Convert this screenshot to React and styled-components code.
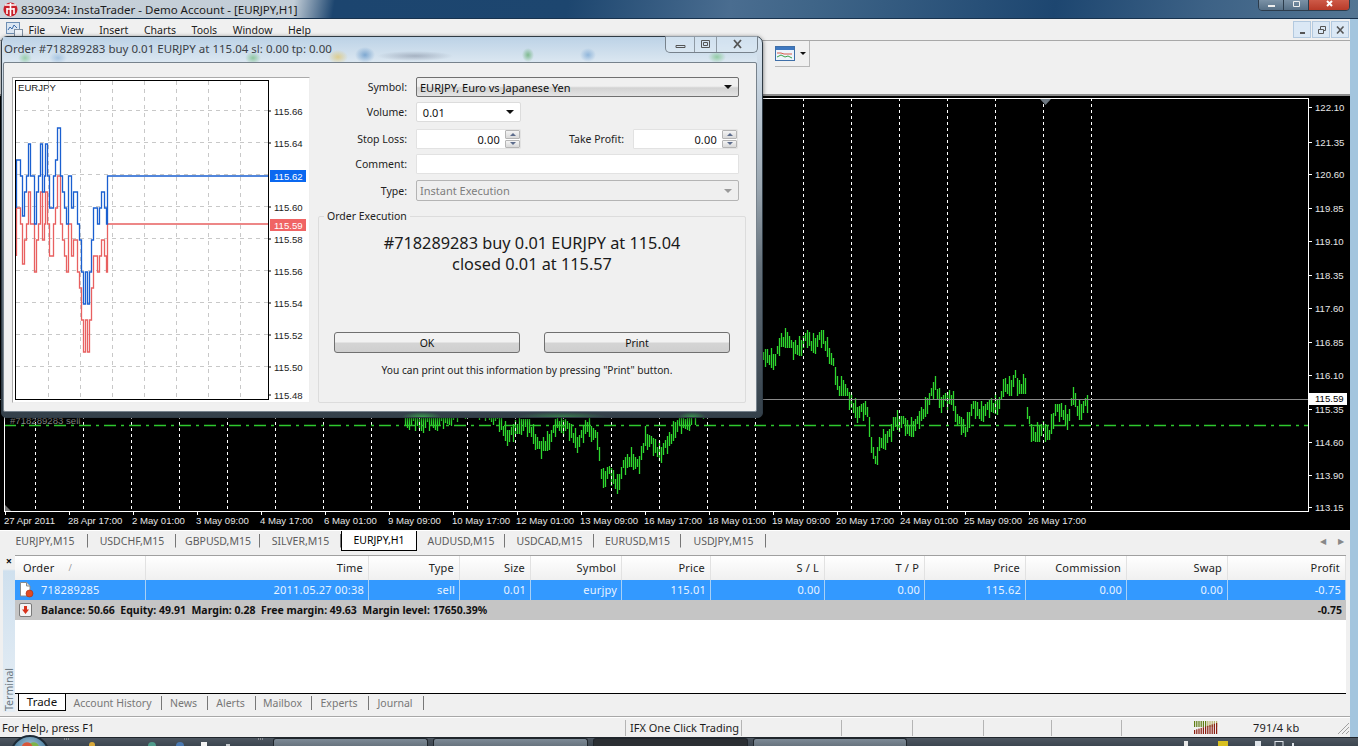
import React from "react";
import styled, { createGlobalStyle } from "styled-components";

const GlobalStyle = createGlobalStyle`
  * {
    box-sizing: border-box;
  }
  html, body {
    margin: 0;
    height: 100%;
    overflow: hidden;
    background: #f0f0f0;
  }
  body, button {
    font-family: "Noto Sans", "Liberation Sans", sans-serif;
    font-size: 11px;
    color: #111;
  }
`;

const MENU = ["File", "View", "Insert", "Charts", "Tools", "Window", "Help"];
const SYMBOL_TABS = [
  ["EURJPY,M15", 86], ["USDCHF,M15", 88], ["GBPUSD,M15", 84], ["SILVER,M15", 81], ["EURJPY,H1", 76],
  ["AUDUSD,M15", 88], ["USDCAD,M15", 89], ["EURUSD,M15", 87], ["USDJPY,M15", 85],
];
const TERMINAL_TABS = [["Account History", 96], ["News", 46], ["Alerts", 48], ["Mailbox", 56], ["Experts", 57], ["Journal", 55]];
const COLUMNS = ["Time", "Type", "Size", "Symbol", "Price", "S / L", "T / P", "Price", "Commission", "Swap", "Profit"];
const ROW = ["2011.05.27 00:38", "sell", "0.01", "eurjpy", "115.01", "0.00", "0.00", "115.62", "0.00", "0.00", "-0.75"];
const GRID = "131px 223px 91px 71px 91px 89px 114px 100px 101px 101px 101px 118px";

const PRICES = [
  ["122.10", 107], ["121.35", 142], ["120.60", 174], ["119.85", 208], ["119.10", 241], ["118.35", 275], ["117.60", 308],
  ["116.85", 342], ["116.10", 375], ["115.35", 409], ["114.60", 442], ["113.90", 475], ["113.15", 507],
];
const DATES = [
  "27 Apr 2011", "28 Apr 17:00", "2 May 01:00", "3 May 09:00", "4 May 17:00", "6 May 01:00", "9 May 09:00", "10 May 17:00", "12 May 01:00",
  "13 May 09:00", "16 May 17:00", "18 May 01:00", "19 May 09:00", "20 May 17:00", "24 May 01:00", "25 May 09:00", "26 May 17:00",
];
const TREND = [
  [405, 418], [420, 422], [440, 420], [470, 405], [495, 415], [508, 437], [520, 424], [530, 428], [540, 450], [550, 438], [557, 423], [565, 425],
  [578, 443], [587, 425], [597, 440], [602, 480], [608, 472], [617, 485], [623, 467], [632, 457], [638, 468], [645, 437], [660, 453], [670, 440],
  [675, 427], [690, 420], [700, 410], [740, 380], [765, 357], [775, 360], [780, 343], [787, 337], [792, 350], [798, 348], [807, 338], [812, 345],
  [822, 337], [828, 350], [833, 365], [838, 390], [843, 385], [848, 398], [857, 412], [867, 410], [870, 437], [875, 463], [880, 442], [890, 435],
  [895, 420], [902, 422], [908, 430], [917, 423], [923, 412], [930, 397], [935, 385], [940, 402], [952, 398], [957, 420], [965, 430], [972, 407],
  [980, 413], [990, 407], [1000, 403], [1003, 387], [1010, 387], [1015, 377], [1018, 390], [1025, 383], [1027, 413], [1032, 437], [1043, 428],
  [1048, 437], [1055, 410], [1063, 413], [1068, 420], [1073, 395], [1078, 412], [1088, 402],
];
const TICK_PRICES = [["115.66", 111], ["115.64", 143], ["115.60", 207], ["115.58", 239], ["115.56", 271], ["115.54", 303], ["115.52", 335], ["115.50", 367], ["115.48", 395]];
const TICKS = [
  [16, 208], [18, 160], [20, 160], [22, 176], [24, 216], [26, 192], [28, 176], [30, 144], [32, 176], [34, 176], [36, 224], [38, 192], [40, 176], [42, 144],
  [44, 192], [45, 176], [47, 144], [49, 176], [51, 208], [53, 208], [55, 176], [57, 160], [60, 128], [62, 176], [64, 192], [66, 208], [68, 224], [71, 176],
  [73, 208], [75, 192], [77, 192], [79, 224], [81, 240], [83, 272], [85, 304], [87, 272], [89, 304], [91, 272], [93, 240], [95, 208], [97, 208], [99, 224],
  [101, 208], [104, 192], [106, 208], [107, 224], [109, 176],
];

// step line, the way the tick chart draws it
const stepPath = (points, dy = 0) =>
  points.map(([x, y], i) => `${i ? "L" : "M"}${x + 0.5} ${y + dy}${i < points.length - 1 ? ` V${points[i + 1][1] + dy}` : ""}`).join(" ");

const bars = () => {
  let d = "";
  for (let x = 405; x <= 1090; x += 2) {
    const next = TREND.findIndex((p) => p[0] >= x);
    const b = TREND[Math.max(next, 1)];
    const a = TREND[Math.max(next, 1) - 1];
    const mid = a[1] + ((b[1] - a[1]) * (x - a[0])) / (b[0] - a[0]);
    const wobble = ((x * 37) % 7) - 3;
    const half = 4 + ((x * 13) % 7);
    d += `M${x + 0.5} ${Math.round(mid + wobble - half)}V${Math.round(mid + wobble + half)}`;
  }
  return d;
};

const Page = styled.div`
  position: relative;
  width: 1358px;
  height: 746px;
  overflow: hidden;
  display: flex;
  flex-direction: column;
`;

const TitleBar = styled.div`
  height: 19px;
  flex: none;
  display: flex;
  align-items: center;
  gap: 3px;
  padding-left: 3px;
  font-size: 11.5px;
  color: #1c1c1c;
  background: linear-gradient(100deg, #c9d2da 0, #c2cdd7 290px, #1c456f 330px, #1d466f 560px, #4a6d90 720px, #3f6588 800px, #1d4670 1040px, #3d6286 1190px, #567895 1358px);
  border-bottom: 1px solid #17324e;
`;

const WindowButtons = styled.div`
  position: absolute;
  top: -6px;
  right: 8px;
  width: 92px;
  height: 17px;
  display: grid;
  grid-template-columns: 25px 25px 1fr;
  border: 1px solid #2c3c4c;
  border-radius: 0 0 4px 4px;
  overflow: hidden;
  span {
    background: linear-gradient(#8da3b6, #566f86);
    border-right: 1px solid #2c3c4c;
    display: flex;
    align-items: flex-end;
    justify-content: center;
    padding-bottom: 2px;
  }
  span:last-child {
    background: linear-gradient(#d86a58, #b83a28);
    border-right: 0;
  }
`;

const Frame = styled.div`
  flex: 1;
  min-height: 0;
  display: flex;
  flex-direction: column;
  border-right: 8px solid #a3c5de;
`;

const MenuBar = styled.div`
  height: 22px;
  flex: none;
  display: flex;
  align-items: center;
  gap: 15.5px;
  padding-left: 5px;
  background: #f0f0f0;
  border-bottom: 1px solid #a8a8a8;
  font-size: 10.5px;
`;

const MenuItem = styled.span`
  color: #222;
`;

const MdiButtons = styled.div`
  margin-left: auto;
  margin-right: 1px;
  display: flex;
  gap: 1px;
`;

const MdiButton = styled.span`
  width: 18px;
  height: 17px;
  display: flex;
  align-items: center;
  justify-content: center;
  background: #dbe8f5;
  border: 1px solid #b3c9df;
`;

const ToolBar = styled.div`
  height: 55px;
  flex: none;
  display: flex;
  align-items: flex-start;
  justify-content: flex-end;
  padding-right: 540px;
  background: #f0f0f0;
  border-bottom: 2px solid #8d8d8d;
`;

const ToolGroup = styled.div`
  height: 26px;
  padding: 0 3px 0 0;
  display: flex;
  align-items: center;
  gap: 5px;
  border-right: 1px solid #b8b8b8;
  border-bottom: 1px solid #b8b8b8;
`;

const Caret = styled.span`
  width: 0;
  height: 0;
  border-left: 3px solid transparent;
  border-right: 3px solid transparent;
  border-top: 3px solid #111;
`;

const ChartArea = styled.div`
  height: 434px;
  flex: none;
  background: #000;
  svg {
    display: block;
  }
  text {
    font-family: "Liberation Sans", sans-serif;
    font-size: 9.6px;
    fill: #e6e6e6;
  }
`;

const BarsPath = styled.path`
  stroke: #2ed82e;
  stroke-width: 1.3;
  fill: none;
`;

const StopLine = styled.line`
  stroke: #2ec82e;
  stroke-width: 1.3;
  stroke-dasharray: 12 5 3 5;
`;

const SymbolTabs = styled.div`
  height: 22px;
  flex: none;
  display: flex;
  align-items: flex-start;
  padding-left: 2px;
  background: #f0f0f0;
  border-top: 1px solid #fff;
`;

const SymbolTab = styled.span`
  width: ${(p) => p.$w}px;
  height: ${(p) => (p.$active ? "20px" : "14px")};
  margin-top: ${(p) => (p.$active ? "0" : "3px")};
  display: flex;
  align-items: center;
  justify-content: center;
  padding-bottom: ${(p) => (p.$active ? "1px" : "0")};
  font-size: 10.5px;
  white-space: nowrap;
  color: ${(p) => (p.$active ? "#000" : "#5c5c5c")};
  background: ${(p) => (p.$active ? "#fff" : "transparent")};
  border: 1px solid #000;
  border-top: 0;
  border-color: ${(p) => (p.$active ? "#000" : "transparent #777 transparent transparent")};
`;

const ScrollArrows = styled.span`
  margin-left: auto;
  margin-right: 6px;
  height: 19px;
  display: flex;
  align-items: center;
  gap: 12px;
  color: #888;
  font-size: 8px;
`;

const Terminal = styled.div`
  flex: 1;
  min-height: 0;
  display: flex;
  background: #f0f0f0;
  padding: 3px 4px 4px 0;
  border-bottom: 1px solid #a8a8a8;
`;

const SideStrip = styled.div`
  width: 12px;
  margin-left: 3px;
  flex: none;
  display: flex;
  flex-direction: column;
  justify-content: space-between;
  align-items: center;
  background: linear-gradient(#f0f0f0 14px, #cfe0ee 16px, #e6eef5);
`;

const CloseMark = styled.span`
  font-size: 11px;
  font-weight: 700;
  line-height: 12px;
`;

const SideLabel = styled.span`
  writing-mode: vertical-rl;
  transform: rotate(180deg);
  color: #6a7680;
  font-size: 10.5px;
  padding-top: 1px;
`;

const TerminalBody = styled.div`
  flex: 1;
  min-width: 0;
  display: flex;
  flex-direction: column;
`;

const TableHead = styled.div`
  height: 25px;
  flex: none;
  display: grid;
  grid-template-columns: ${GRID};
  border-top: 1px solid #a0a0a0;
  background: linear-gradient(#fff, #f0f0f0);
`;

const HeadCell = styled.div`
  display: flex;
  align-items: center;
  justify-content: ${(p) => (p.$left ? "flex-start" : "flex-end")};
  padding: 0 5px 2px 8px;
  border-right: 1px solid #e2e2e2;
  letter-spacing: 0.2px;
  color: #222;
  gap: 14px;
`;

const SortMark = styled.span`
  color: #999;
  font-size: 9px;
`;

const TableRow = styled.div`
  height: 20px;
  flex: none;
  display: grid;
  grid-template-columns: ${GRID};
  background: #3399ff;
  color: #e8f3ff;
`;

const RowCell = styled.div`
  display: flex;
  align-items: center;
  justify-content: ${(p) => (p.$left ? "flex-start" : "flex-end")};
  gap: 7px;
  padding: 0 4px 1px ${(p) => (p.$left ? "3px" : "0")};
  border-right: 1px solid #a9d0f5;
  letter-spacing: 0.2px;
`;

const SummaryRow = styled.div`
  height: 20px;
  flex: none;
  display: flex;
  align-items: center;
  padding: 0 4px;
  background: #c5c5c5;
  font-weight: 700;
  font-size: 10.5px;
  color: #111;
`;

const SummaryText = styled.span`
  margin-left: 9px;
  flex: 1;
`;

const TableFill = styled.div`
  flex: 1;
  background: #fff;
`;

const TerminalTabs = styled.div`
  height: 19px;
  flex: none;
  display: flex;
  align-items: flex-start;
  border-top: 1px solid #000;
  padding-left: 3px;
`;

const ActiveTab = styled.span`
  width: 48px;
  height: 18px;
  margin-top: -1px;
  padding-bottom: 1px;
  display: flex;
  align-items: center;
  justify-content: center;
  background: #fff;
  border: 1px solid #000;
  font-size: 11.5px;
`;

const TerminalTab = styled.span`
  width: ${(p) => p.$w}px;
  height: 14px;
  margin-top: 2px;
  padding-right: 2px;
  display: flex;
  align-items: center;
  justify-content: center;
  color: #777;
  font-size: 10.5px;
  border-right: 1px solid #777;
  white-space: nowrap;
`;

const StatusBar = styled.div`
  height: 20px;
  flex: none;
  display: grid;
  grid-template-columns: 626px 116px 100px 71px 71px 68px 70px 1fr;
  align-items: center;
  background: #f0f0f0;
  border-top: 1px solid #fff;
`;

const StatusCell = styled.div`
  height: 16px;
  display: flex;
  align-items: center;
  padding-left: ${(p) => (p.$wide ? "2px" : "4px")};
  border-right: ${(p) => (p.$last ? "0" : "1px solid #b4b4b4")};
  white-space: nowrap;
  color: #1c1c1c;
`;

const Memory = styled.span`
  margin-left: 35px;
  letter-spacing: 0.2px;
`;

const TaskBar = styled.div`
  height: 9px;
  flex: none;
  position: relative;
  display: flex;
  align-items: flex-start;
  gap: 5px;
  background: linear-gradient(#4d5660, #3c4650);
  border-top: 1px solid #20262c;
`;

const StartOrb = styled.span`
  position: absolute;
  left: 10px;
  top: -3px;
  width: 40px;
  height: 40px;
  border-radius: 50%;
  border: 2px solid #1d2a36;
  background:
    radial-gradient(circle at 42% 30%, #d8563a 0 5px, transparent 6px),
    radial-gradient(circle at 60% 30%, #7eb34a 0 5px, transparent 6px),
    radial-gradient(circle at 50% 30%, #a8c8dc 0, #5a8aa8 14px, #223c58 26px);
`;

const TaskItem = styled.span`
  width: ${(p) => p.$w}px;
  height: 8px;
  border: 1px solid #20262c;
  border-bottom: 0;
  border-radius: 3px 3px 0 0;
  background: ${(p) => (p.$dark ? "#2b2f33" : "linear-gradient(#7d8a96, #68747f)")};
`;

/* floating order window */
const Dialog = styled.div`
  position: absolute;
  left: 1px;
  top: 36px;
  width: 762px;
  height: 382px;
  border: 1px solid #2f3b45;
  border-radius: 6px 7px 5px 5px;
  padding: 0 5px 5px 1px;
  display: flex;
  flex-direction: column;
  background:
    radial-gradient(ellipse 20px 5px at 420px 100%, rgba(60, 200, 80, 0.7), transparent),
    radial-gradient(ellipse 45px 5px at 560px 100%, rgba(60, 200, 80, 0.45), transparent),
    radial-gradient(ellipse 14px 5px at 690px 100%, rgba(60, 200, 80, 0.6), transparent),
    linear-gradient(#d7e4f0 0, #cbd8e4 10%, #9aa6b0 40%, #66727c 60%, #34404a 100%);
  box-shadow: 0 1px 4px rgba(0, 0, 0, 0.55);
`;

const DialogTitle = styled.div`
  height: 25px;
  flex: none;
  display: flex;
  align-items: center;
  padding: 0 0 2px 1px;
  color: #3a4046;
  font-size: 11.5px;
  background:
    radial-gradient(ellipse 7px 6px at 22px 21px, rgba(80, 180, 90, 0.45), transparent),
    radial-gradient(ellipse 9px 6px at 55px 21px, rgba(80, 140, 200, 0.35), transparent),
    radial-gradient(ellipse 8px 6px at 250px 21px, rgba(70, 170, 80, 0.5), transparent),
    radial-gradient(ellipse 10px 7px at 335px 20px, rgba(225, 190, 80, 0.6), transparent),
    radial-gradient(ellipse 10px 8px at 362px 18px, rgba(70, 130, 190, 0.6), transparent),
    radial-gradient(ellipse 38px 5px at 412px 19px, rgba(110, 120, 140, 0.45), transparent),
    radial-gradient(ellipse 6px 7px at 525px 18px, rgba(70, 160, 80, 0.6), transparent),
    radial-gradient(ellipse 8px 7px at 585px 18px, rgba(80, 140, 200, 0.5), transparent),
    radial-gradient(ellipse 9px 6px at 714px 20px, rgba(80, 180, 90, 0.5), transparent),
    linear-gradient(#bcd2e6, #dbe7f1);
  position: relative;
`;

const DialogButtons = styled.div`
  position: absolute;
  top: -1px;
  right: -1px;
  width: 93px;
  height: 17px;
  display: grid;
  grid-template-columns: 29px 22px 1fr;
  border: 1px solid #77828c;
  border-top: 0;
  border-radius: 0 0 5px 5px;
  background: rgba(225, 236, 246, 0.55);
  span {
    display: flex;
    align-items: center;
    justify-content: center;
    border-right: 1px solid #8f9aa4;
  }
  span:last-child {
    border-right: 0;
  }
`;

const DialogBody = styled.div`
  flex: 1;
  min-height: 0;
  display: flex;
  gap: 8px;
  padding: 14px 10px 8px 8px;
  background: #f0f0f0;
  border: 1px solid #77828c;
  border-radius: 2px;
`;

const TickFrame = styled.div`
  width: 298px;
  height: 326px;
  flex: none;
  background: #fff;
  border: 1px solid #aaa;
  border-right-color: #eee;
  border-bottom-color: #eee;
  svg {
    display: block;
  }
  text {
    font-family: "Liberation Sans", sans-serif;
    font-size: 9.6px;
    fill: #222;
  }
`;

const OrderPane = styled.div`
  flex: 1;
  min-width: 0;
  display: flex;
  flex-direction: column;
`;

const FormRow = styled.div`
  display: flex;
  align-items: center;
  height: ${(p) => p.$h || 20}px;
  flex: none;
  margin-bottom: ${(p) => p.$gap ?? 6}px;
`;

const FieldLabel = styled.label`
  width: ${(p) => p.$w || 98}px;
  flex: none;
  padding-right: 9px;
  text-align: right;
  font-size: 10.5px;
  color: #222;
`;

const Select = styled.div`
  width: ${(p) => p.$w || 323}px;
  height: ${(p) => p.$h || 20}px;
  flex: none;
  display: flex;
  align-items: center;
  justify-content: space-between;
  padding: 0 6px 0 3px;
  border: 1px solid ${(p) => (p.$plain ? "#dcdcdc" : p.$off ? "#b4b4b4" : "#707070")};
  border-radius: 2px;
  color: ${(p) => (p.$off ? "#7d7d7d" : "#111")};
  background: ${(p) => (p.$plain ? "#fff" : p.$off ? "#efefef" : "linear-gradient(#f0f0f0 45%, #d2d2d2 55%, #e4e4e4)")};
`;

const SelectCaret = styled.span`
  width: 0;
  height: 0;
  border-left: 4px solid transparent;
  border-right: 4px solid transparent;
  border-top: 4px solid ${(p) => (p.$off ? "#9a9a9a" : "#111")};
`;

const TextField = styled.div`
  width: ${(p) => p.$w}px;
  height: 20px;
  flex: none;
  display: flex;
  align-items: center;
  justify-content: flex-end;
  background: #fff;
  border: 1px solid #e2e2e2;
  border-radius: 1px;
`;

const SpinValue = styled.span`
  margin-right: 5px;
  letter-spacing: 0.2px;
`;

const Spinner = styled.span`
  width: 15px;
  height: 18px;
  display: grid;
  grid-template-rows: 1fr 1fr;
  gap: 1px;
  i {
    display: flex;
    align-items: center;
    justify-content: center;
    background: linear-gradient(#f4f4f4, #d9d9d9);
    border: 1px solid #b5b5b5;
    border-radius: 1px;
  }
`;

const SpinArrow = styled.b`
  width: 0;
  height: 0;
  border-left: 3px solid transparent;
  border-right: 3px solid transparent;
  ${(p) => (p.$up ? "border-bottom: 3px solid #5c6c8c;" : "border-top: 3px solid #5c6c8c;")}
`;

const ExecutionGroup = styled.fieldset`
  margin: 0;
  flex: 1;
  min-height: 0;
  min-width: 0;
  padding: 0;
  border: 1px solid #dcdcdc;
  border-radius: 2px;
  display: flex;
  flex-direction: column;
  align-items: center;
  legend {
    margin-left: 5px;
    padding: 0 3px;
    font-size: 10.5px;
    color: #222;
  }
`;

const Result = styled.div`
  margin-top: 10px;
  height: 99px;
  text-align: center;
  font-size: 16.3px;
  line-height: 21px;
  color: #1a1a1a;
`;

const ButtonRow = styled.div`
  display: flex;
  gap: 24px;
`;

const PushButton = styled.button`
  width: 186px;
  height: 21px;
  padding: 0;
  border: 1px solid #707070;
  border-radius: 3px;
  font-size: 10.5px;
  color: #111;
  background: linear-gradient(#f2f2f2 45%, #d4d4d4 55%, #cfcfcf);
`;

const PrintNote = styled.div`
  margin: 10px 10px 0 0;
  font-size: 10.2px;
  color: #222;
`;

const PriceChart = () => {
  const verticals = Array.from({ length: 23 }, (_, i) => 35.5 + i * 48);
  return (
    <svg width="1350" height="434" viewBox="0 96 1350 434">
      <BarsPath d={bars()} />
      {verticals.map((x) => (
        <line key={x} x1={x} x2={x} y1="98" y2="511" stroke="#fff" strokeDasharray="3 3" />
      ))}
      <line x1="0" x2="1308" y1="399.5" y2="399.5" stroke="#8a8a8a" />
      <StopLine x1="4" x2="1308" y1="425.5" y2="425.5" />
      <text x="10" y="424" style={{ fill: "#888" }}>#718289283 sell</text>
      <rect x="4.5" y="98.5" width="1304" height="413" fill="none" stroke="#fff" />
      <path d="M5 505 L11 511 H5 Z" fill="#777" />
      <path d="M1040 99 H1051 L1045.500 105 Z" fill="#6d7780" />
      {PRICES.map(([label, y]) => (
        <g key={label}>
          <line x1="1308" x2="1312" y1={y + 0.5} y2={y + 0.5} stroke="#fff" />
          <text x="1315" y={y + 3.500}>{label}</text>
        </g>
      ))}
      <rect x="1309" y="393" width="38" height="12" fill="#fff" />
      <text x="1315" y="402" style={{ fill: "#000" }}>115.59</text>
      {DATES.map((label, i) => (
        <g key={label}>
          <line x1={5.500 + i * 64} x2={5.500 + i * 64} y1="511" y2="515" stroke="#fff" />
          <text x={4 + i * 64} y="524">{label}</text>
        </g>
      ))}
    </svg>
  );
};

const TickChart = () => {
  const cols = [48, 80, 112, 144, 176, 208, 240];
  const rows = [110, 142, 174, 206, 238, 270, 302, 334, 366];
  return (
    <svg width="296" height="324" viewBox="13 78 296 324">
      {cols.map((x) => (
        <line key={x} x1={x + 0.5} x2={x + 0.5} y1="81" y2="399" stroke="#c8c8c8" strokeDasharray="4 4" />
      ))}
      {rows.map((y) => (
        <line key={y} x1="16" x2="268" y1={y + 0.5} y2={y + 0.5} stroke="#c8c8c8" strokeDasharray="4 4" />
      ))}
      <path d={`${stepPath(TICKS, 48)} H268`} stroke="#e86060" strokeWidth="1.3" fill="none" />
      <path d={`${stepPath(TICKS)} H268`} stroke="#1a5fd0" strokeWidth="1.3" fill="none" />
      <rect x="15.500" y="80.500" width="253" height="319" fill="none" stroke="#000" strokeWidth="1" />
      <text x="18" y="91">EURJPY</text>
      {TICK_PRICES.map(([label, y]) => (
        <g key={label}>
          <line x1="268" x2="271" y1={y} y2={y} stroke="#000" />
          <text x="274" y={y + 3.500}>{label}</text>
        </g>
      ))}
      <rect x="270" y="170" width="36" height="12" fill="#0a68f0" />
      <text x="274" y="179.500" style={{ fill: "#fff" }}>115.62</text>
      <rect x="270" y="219" width="36" height="12" fill="#f06464" />
      <text x="274" y="228.500" style={{ fill: "#fff" }}>115.59</text>
    </svg>
  );
};

const AppLogo = () => (
  <svg width="15" height="15" viewBox="0 0 15 15">
    <circle cx="7.500" cy="7.500" r="7" fill="#c8202a" />
    <path d="M2 3h11M7.500 1v13M4 6v6M11 6v6M4 7h7" stroke="#fff" strokeWidth="1.600" fill="none" />
  </svg>
);

const DocIcon = () => (
  <svg width="16" height="17" viewBox="0 0 16 17">
    <path d="M2.500 1.500h6l3.500 3.500v10h-9.500z" fill="#fff" stroke="#8a8a8a" />
    <path d="M8.500 1.500v3.500h3.500" fill="#ddd" stroke="#8a8a8a" />
    <circle cx="11.500" cy="12.500" r="3.500" fill="#e04b24" stroke="#a62a10" strokeWidth="0.600" />
  </svg>
);

const DownIcon = () => (
  <svg width="13" height="14" viewBox="0 0 13 14">
    <rect x="0.500" y="0.500" width="12" height="13" rx="1.500" fill="#f4f4f4" stroke="#7a7a7a" />
    <path d="M5 3h3v3.500h2L6.500 11 3 6.500h2z" fill="#d8321c" />
  </svg>
);

const MenuIcon = () => (
  <svg width="19" height="17" viewBox="0 0 19 17" style={{ marginRight: -11 }}>
    <rect x="1.500" y="1.500" width="13" height="11" fill="#dbe6f2" stroke="#6f8fb4" />
    <path d="M3 9l2-3 2 2 2-4 3 3" stroke="#3a6aa8" fill="none" />
    <rect x="9.500" y="8.500" width="8" height="7" fill="#eef3f8" stroke="#7d8ea2" />
  </svg>
);

const IndicatorIcon = () => (
  <svg width="20" height="15" viewBox="0 0 20 15">
    <rect x="0.500" y="0.500" width="19" height="14" fill="#eef4fb" stroke="#3f6fa8" />
    <rect x="1" y="1" width="18" height="3" fill="#3f78c0" />
    <path d="M2 7h4l3 1h8" stroke="#d85a4a" fill="none" />
    <path d="M2 11l4-2 4 2 3-1 4 2" stroke="#3ca04a" fill="none" />
  </svg>
);

const SignalBars = () => (
  <svg width="24" height="13" viewBox="0 0 24 13" style={{ marginLeft: 68 }}>
    {Array.from({ length: 11 }, (_, i) => (
      <g key={i}>
        <rect x={i * 2.200} y="0" width="1.200" height="6" fill={i < 6 ? "#5f7d12" : "#b8b26a"} />
        <rect x={i * 2.200} y={9 - i * 0.700} width="1.200" height={4 + i * 0.700} fill="#8a1d10" />
      </g>
    ))}
  </svg>
);

const Grip = () => (
  <svg width="14" height="14" viewBox="0 0 14 14" style={{ marginLeft: "auto" }}>
    <path d="M13 2L2 13M13 6L6 13M13 10L10 13" stroke="#a0a0a0" fill="none" />
  </svg>
);

const QuickLaunch = () => (
  <svg width="268" height="8" viewBox="0 0 268 8">
    <path d="M64 1h1M66 1h1M68 1h1M258 1h1M260 1h1M262 1h1" stroke="#c8c8c8" />
    <circle cx="92" cy="7" r="3" fill="#d8a83a" />
    <circle cx="152" cy="8" r="4" fill="#4f9a8a" />
    <circle cx="180" cy="8" r="4" fill="#4a78b0" />
    <rect x="201" y="4" width="6" height="4" fill="#f4f4f4" />
    <rect x="226" y="6" width="4" height="2" fill="#c8ccd0" />
  </svg>
);

const Tray = () => (
  <svg width="120" height="8" viewBox="0 0 120 8" style={{ marginLeft: "auto", marginRight: 54 }}>
    <rect x="0" y="3" width="4" height="5" fill="#e8e8e8" />
    <rect x="34" y="3" width="10" height="5" fill="#d8c020" />
    <rect x="71" y="3" width="6" height="5" fill="#dfe4ea" />
    <rect x="91" y="3.500" width="8" height="5" fill="none" stroke="#dfe4ea" />
    <rect x="108" y="5" width="2" height="3" fill="#dfe4ea" />
  </svg>
);

const Glyph = ({ d, stroke = "#555", w = 1 }) => (
  <svg width="11" height="10" viewBox="0 0 11 10">
    <path d={d} stroke={stroke} strokeWidth={w} fill="none" />
  </svg>
);

const App = () => (
  <Page>
    <GlobalStyle />
    <TitleBar>
      <AppLogo />
      <span>8390934: InstaTrader - Demo Account - [EURJPY,H1]</span>
      <WindowButtons>
        <span><Glyph d="M2 8h7" stroke="#eee" w={2} /></span>
        <span><Glyph d="M2.500 3.500h6v5h-6z" stroke="#eee" /></span>
        <span><Glyph d="M3 3l5 5M8 3l-5 5" stroke="#fff" w={2} /></span>
      </WindowButtons>
    </TitleBar>
    <Frame>
      <MenuBar>
        <MenuIcon />
        {MENU.map((item) => (
          <MenuItem key={item}>{item}</MenuItem>
        ))}
        <MdiButtons>
          <MdiButton><Glyph d="M3 8h5" w={2} /></MdiButton>
          <MdiButton><Glyph d="M2.500 4.500h5v4h-5zM4.500 4V1.500h5v4H8" /></MdiButton>
          <MdiButton><Glyph d="M2 1.500l6.500 7M8.500 1.500l-6.500 7" w={1.600} /></MdiButton>
        </MdiButtons>
      </MenuBar>
      <ToolBar>
        <ToolGroup>
          <IndicatorIcon />
          <Caret />
        </ToolGroup>
      </ToolBar>
      <ChartArea>
        <PriceChart />
      </ChartArea>
      <SymbolTabs>
        {SYMBOL_TABS.map(([tab, w], i) => (
          <SymbolTab key={tab + i} $w={w} $active={i === 4}>{tab}</SymbolTab>
        ))}
        <ScrollArrows>
          <span>◀</span>
          <span>▶</span>
        </ScrollArrows>
      </SymbolTabs>
      <Terminal>
        <SideStrip>
          <CloseMark>×</CloseMark>
          <SideLabel>Terminal</SideLabel>
        </SideStrip>
        <TerminalBody>
          <TableHead>
            <HeadCell $left>
              Order <SortMark>/</SortMark>
            </HeadCell>
            {COLUMNS.map((col, i) => (
              <HeadCell key={col + i}>{col}</HeadCell>
            ))}
          </TableHead>
          <TableRow>
            <RowCell $left>
              <DocIcon />
              718289285
            </RowCell>
            {ROW.map((value, i) => (
              <RowCell key={i}>{value}</RowCell>
            ))}
          </TableRow>
          <SummaryRow>
            <DownIcon />
            <SummaryText>Balance: 50.66&nbsp; Equity: 49.91&nbsp; Margin: 0.28&nbsp; Free margin: 49.63&nbsp; Margin level: 17650.39%</SummaryText>
            <span>-0.75</span>
          </SummaryRow>
          <TableFill />
          <TerminalTabs>
            <ActiveTab>Trade</ActiveTab>
            {TERMINAL_TABS.map(([tab, w]) => (
              <TerminalTab key={tab} $w={w}>{tab}</TerminalTab>
            ))}
          </TerminalTabs>
        </TerminalBody>
      </Terminal>
      <StatusBar>
        <StatusCell $wide>For Help, press F1</StatusCell>
        <StatusCell>IFX One Click Trading</StatusCell>
        <StatusCell />
        <StatusCell />
        <StatusCell />
        <StatusCell />
        <StatusCell />
        <StatusCell $last>
          <SignalBars />
          <Memory>791/4 kb</Memory>
          <Grip />
        </StatusCell>
      </StatusBar>
    </Frame>
    <TaskBar>
      <StartOrb />
      <QuickLaunch />
      <TaskItem $w={155} />
      <TaskItem $w={155} />
      <TaskItem $w={155} $dark />
      <TaskItem $w={154} />
      <Tray />
    </TaskBar>
    <Dialog>
      <DialogTitle>
        Order #718289283 buy 0.01 EURJPY at 115.04 sl: 0.00 tp: 0.00
        <DialogButtons>
          <span><Glyph d="M1 6.500h9v2h-9z" /></span>
          <span><Glyph d="M1.500 1.500h8v7h-8zM3.500 3.500h4v3h-4z" /></span>
          <span><Glyph d="M2 1l7 8M9 1l-7 8" w={1.800} /></span>
        </DialogButtons>
      </DialogTitle>
      <DialogBody>
        <TickFrame>
          <TickChart />
        </TickFrame>
        <OrderPane>
          <FormRow $gap={5}>
            <FieldLabel>Symbol:</FieldLabel>
            <Select>
              EURJPY, Euro vs Japanese Yen
              <SelectCaret />
            </Select>
          </FormRow>
          <FormRow $gap={7}>
            <FieldLabel>Volume:</FieldLabel>
            <Select $w={105} $plain>
              &nbsp;0.01
              <SelectCaret />
            </Select>
          </FormRow>
          <FormRow $gap={5}>
            <FieldLabel>Stop Loss:</FieldLabel>
            <TextField $w={105}>
              <SpinValue>0.00</SpinValue>
              <Spinner>
                <i><SpinArrow $up /></i>
                <i><SpinArrow /></i>
              </Spinner>
            </TextField>
            <FieldLabel $w={112}>Take Profit:</FieldLabel>
            <TextField $w={105}>
              <SpinValue>0.00</SpinValue>
              <Spinner>
                <i><SpinArrow $up /></i>
                <i><SpinArrow /></i>
              </Spinner>
            </TextField>
          </FormRow>
          <FormRow $gap={6}>
            <FieldLabel>Comment:</FieldLabel>
            <TextField $w={323} />
          </FormRow>
          <FormRow $h={21} $gap={8}>
            <FieldLabel>Type:</FieldLabel>
            <Select $off $h={21}>
              Instant Execution
              <SelectCaret $off />
            </Select>
          </FormRow>
          <ExecutionGroup>
            <legend>Order Execution</legend>
            <Result>
              #718289283 buy 0.01 EURJPY at 115.04
              <br />
              closed 0.01 at 115.57
            </Result>
            <ButtonRow>
              <PushButton>OK</PushButton>
              <PushButton>Print</PushButton>
            </ButtonRow>
            <PrintNote>You can print out this information by pressing "Print" button.</PrintNote>
          </ExecutionGroup>
        </OrderPane>
      </DialogBody>
    </Dialog>
  </Page>
);

export default App;
